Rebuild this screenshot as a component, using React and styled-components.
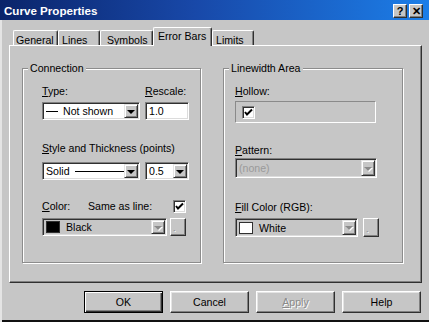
import React from 'react';
import styled, { createGlobalStyle } from 'styled-components';

const FACE = '#c6c6c6';

const GlobalStyle = createGlobalStyle`
  html, body {
    margin: 0;
    padding: 0;
    background: ${FACE};
  }
  body {
    font-family: "Liberation Sans", Arial, sans-serif;
    font-size: 10.6px;
    color: #000;
  }
`;

const Window = styled.div`
  width: 429px;
  height: 322px;
  box-sizing: border-box;
  background: ${FACE};
  display: flex;
  flex-direction: column;
  box-shadow: inset 2px 0 0 #e4e4e4, inset 0 -2px 0 #111;
  overflow: hidden;
`;

const TitleBar = styled.div`
  height: 20px;
  display: flex;
  align-items: center;
  padding: 0 6px 0 4px;
  background: linear-gradient(90deg, #0a246a 0%, #1848a8 45%, #1c7ee8 100%);
`;

const Title = styled.div`
  flex: 1;
  color: #fff;
  font-weight: bold;
  font-size: 11.6px;
`;

const CaptionButton = styled.div`
  width: 14px;
  height: 14px;
  box-sizing: border-box;
  margin-left: ${p => p.$gap || 0}px;
  margin-top: 2px;
  background: ${FACE};
  border: 1px solid;
  border-color: #fff #303030 #303030 #fff;
  box-shadow: inset -1px -1px 0 #808080;
  display: flex;
  align-items: center;
  justify-content: center;
  font-weight: bold;
  font-size: 11px;
  line-height: 1;
`;

const Body = styled.div`
  flex: 1;
  display: flex;
  flex-direction: column;
  padding: 8px 7px 0 9px;
`;

const TabStrip = styled.div`
  height: 17px;
  display: flex;
  align-items: flex-end;
  padding-left: 4px;
`;

const Tab = styled.div`
  position: relative;
  z-index: ${p => (p.$active ? 1 : 0)};
  width: ${p => p.$w}px;
  height: ${p => (p.$active ? 19 : 15)}px;
  margin-bottom: ${p => (p.$active ? -1 : 0)}px;
  box-sizing: border-box;
  padding: ${p => (p.$active ? 2 : 3)}px 0 0 ${p => p.$pad}px;
  background: ${FACE};
  border-top: 1px solid #fff;
  border-left: 1px solid #fff;
  border-right: 1px solid #303030;
  border-radius: 2px 2px 0 0;
  box-shadow: inset -1px 0 0 #808080;
  line-height: 12px;
  white-space: nowrap;
  overflow: hidden;
`;

const Panel = styled.div`
  height: 238px;
  box-sizing: border-box;
  border-top: 1px solid #fff;
  border-left: 1px solid #fff;
  border-right: 1px solid #303030;
  border-bottom: 1px solid #303030;
  box-shadow: inset -1px -1px 0 #808080;
  display: flex;
  align-items: flex-start;
  gap: 22px;
  padding: 22px 0 0 12px;
`;

const Frame = styled.div`
  width: ${p => p.$w}px;
  height: 195px;
  box-sizing: border-box;
  border: 1px solid #8c8c8c;
  box-shadow: inset 1px 1px 0 #fff, 1px 1px 0 #fff;
  display: flex;
  flex-direction: column;
`;

const Caption = styled.div`
  align-self: flex-start;
  margin: -7px 0 0 5px;
  padding: 0 2px;
  background: ${FACE};
  line-height: 13px;
`;

const Content = styled.div`
  display: flex;
  flex-direction: column;
  padding-left: ${p => p.$pl}px;
`;

const Label = styled.div`
  margin-top: ${p => p.$mt || 0}px;
  width: ${p => (p.$w ? `${p.$w}px` : 'auto')};
  flex: none;
  line-height: 13px;
  height: 13px;
  white-space: nowrap;
  color: ${p => (p.$dim ? '#808080' : '#000')};
`;

const U = styled.span`
  text-decoration: underline;
`;

const Row = styled.div`
  display: flex;
  align-items: flex-start;
  gap: ${p => p.$gap || 0}px;
  margin-top: ${p => p.$mt || 0}px;
`;

const Sunken = styled.div`
  width: ${p => p.$w}px;
  height: ${p => p.$h}px;
  box-sizing: border-box;
  border: 1px solid;
  border-color: #808080 #fff #fff #808080;
  box-shadow: inset 1px 1px 0 #303030, inset -1px -1px 0 #dcdcdc;
  background: ${p => (p.$grey ? FACE : '#fff')};
  display: flex;
  align-items: stretch;
  padding: 1px;
`;

const Field = styled.div`
  flex: 1;
  display: flex;
  align-items: center;
  padding-left: ${p => p.$pl || 2}px;
  color: ${p => (p.$dim ? '#9a9a9a' : '#000')};
  white-space: nowrap;
  overflow: hidden;
`;

const DropButton = styled.div`
  width: 14px;
  box-sizing: border-box;
  background: ${FACE};
  border: 1px solid;
  border-color: #e4e4e4 #303030 #303030 #e4e4e4;
  box-shadow: inset 1px 1px 0 #fff, inset -1px -1px 0 #808080;
  display: flex;
  align-items: center;
  justify-content: center;
`;

const Arrow = styled.div`
  width: 0;
  height: 0;
  border-left: 4px solid transparent;
  border-right: 4px solid transparent;
  border-top: 4px solid ${p => (p.$dim ? '#8a8a8a' : '#000')};
  filter: ${p => (p.$dim ? 'drop-shadow(1px 1px 0 #fff)' : 'none')};
  margin-top: 1px;
`;

const LineMark = styled.span`
  display: inline-block;
  width: ${p => p.$w}px;
  height: 1px;
  background: #000;
  margin: ${p => p.$m};
`;

const Swatch = styled.span`
  width: 14px;
  height: 12px;
  box-sizing: border-box;
  background: ${p => p.$color};
  border: 1px solid #303030;
  margin-right: 6px;
  flex: none;
`;

const Check = styled.div`
  width: 13px;
  height: 13px;
  box-sizing: border-box;
  background: #fff;
  border: 1px solid;
  border-color: #808080 #fff #fff #808080;
  box-shadow: inset 1px 1px 0 #303030, inset -1px -1px 0 #dcdcdc;
  display: flex;
  align-items: center;
  justify-content: center;
`;

const StaticBox = styled.div`
  width: 141px;
  height: 22px;
  box-sizing: border-box;
  border: 1px solid;
  border-color: #8a8a8a #fff #fff #8a8a8a;
  padding: 4px 6px;
`;

const SmallButton = styled.div`
  width: 16px;
  height: ${p => p.$h}px;
  box-sizing: border-box;
  background: ${FACE};
  border: 1px solid;
  border-color: #fff #303030 #303030 #fff;
  box-shadow: inset -1px -1px 0 #808080;
  display: flex;
  align-items: flex-end;
  padding: 0 0 2px 2px;
  color: #8a8a8a;
  text-shadow: 1px 1px 0 #fff;
  font-size: 9px;
  line-height: 9px;
`;

const ButtonRow = styled.div`
  display: flex;
  justify-content: flex-end;
  gap: 7px;
  margin-top: 8px;
  padding-right: 1px;
`;

const PushButton = styled.div`
  width: 79px;
  height: 22px;
  box-sizing: border-box;
  border: 1px solid;
  border-color: ${p => (p.$default ? '#000' : '#fff #303030 #303030 #fff')};
  box-shadow: ${p =>
    p.$default
      ? 'inset 1px 1px 0 #fff, inset -1px -1px 0 #303030, inset -2px -2px 0 #808080'
      : 'inset -1px -1px 0 #808080, inset 1px 1px 0 #e4e4e4'};
  display: flex;
  align-items: center;
  justify-content: center;
  color: ${p => (p.$disabled ? '#8a8a8a' : '#000')};
  text-shadow: ${p => (p.$disabled ? '1px 1px 0 #fff' : 'none')};
`;

const CheckMark = () => (
  <svg width="9" height="9" viewBox="0 0 9 9">
    <path d="M1 4 L3 6.5 L8 1.5" fill="none" stroke="#000" strokeWidth="2" />
  </svg>
);

const Combo = ({ w, h = 18, grey, dim, children, pl }) => (
  <Sunken $w={w} $h={h} $grey={grey}>
    <Field $pl={pl} $dim={dim}>{children}</Field>
    <DropButton>
      <Arrow $dim={grey} />
    </DropButton>
  </Sunken>
);

const tabs = [
  { name: 'General', w: 45, pad: 2 },
  { name: 'Lines', w: 42, pad: 3 },
  { name: 'Symbols', w: 53, pad: 6 },
  { name: 'Error Bars', w: 59, pad: 4, active: true },
  { name: 'Limits', w: 42, pad: 3 },
];

export default function App() {
  return (
    <>
      <GlobalStyle />
      <Window>
        <TitleBar>
          <Title>Curve Properties</Title>
          <CaptionButton>?</CaptionButton>
          <CaptionButton $gap={2}>✕</CaptionButton>
        </TitleBar>
        <Body>
          <TabStrip>
            {tabs.map(t => (
              <Tab key={t.name} $w={t.w} $pad={t.pad} $active={t.active}>
                {t.name}
              </Tab>
            ))}
          </TabStrip>
          <Panel>
            <Frame $w={179}>
              <Caption>Connection</Caption>
              <Content $pl={19}>
                <Row $mt={10}>
                  <Label $w={103}><U>T</U>ype:</Label>
                  <Label><U>R</U>escale:</Label>
                </Row>
                <Row $mt={4} $gap={5}>
                  <Combo w={98} pl={2}>
                    <LineMark $w={12} $m="0 5px 0 0" />
                    Not shown
                  </Combo>
                  <Sunken $w={44} $h={18}>
                    <Field $pl={2}>1.0</Field>
                  </Sunken>
                </Row>
                <Label $mt={22}><U>S</U>tyle and Thickness (points)</Label>
                <Row $mt={7} $gap={5}>
                  <Combo w={98}>
                    Solid
                    <LineMark $w={50} $m="0 0 0 5px" />
                  </Combo>
                  <Combo w={44}>0.5</Combo>
                </Row>
                <Row $mt={20}>
                  <Label $w={46}><U>C</U>olor:</Label>
                  <Label $w={85}>Same as line:</Label>
                  <Check><CheckMark /></Check>
                </Row>
                <Row $mt={5} $gap={3}>
                  <Combo w={125} grey>
                    <Swatch $color="#000" />
                    Black
                  </Combo>
                  <SmallButton $h={18}>.</SmallButton>
                </Row>
              </Content>
            </Frame>
            <Frame $w={180}>
              <Caption>Linewidth Area</Caption>
              <Content $pl={11}>
                <Label $mt={10}><U>H</U>ollow:</Label>
                <Row $mt={3}>
                  <StaticBox>
                    <Check><CheckMark /></Check>
                  </StaticBox>
                </Row>
                <Label $mt={21}><U>P</U>attern:</Label>
                <Row $mt={1}>
                  <Combo w={142} h={20} grey dim>(none)</Combo>
                </Row>
                <Label $mt={23}><U>F</U>ill Color (RGB):</Label>
                <Row $mt={4} $gap={5}>
                  <Combo w={123} h={19} grey>
                    <Swatch $color="#fff" />
                    White
                  </Combo>
                  <SmallButton $h={19}>.</SmallButton>
                </Row>
              </Content>
            </Frame>
          </Panel>
          <ButtonRow>
            <PushButton $default>OK</PushButton>
            <PushButton>Cancel</PushButton>
            <PushButton $disabled><U>A</U>pply</PushButton>
            <PushButton>Help</PushButton>
          </ButtonRow>
        </Body>
      </Window>
    </>
  );
}
